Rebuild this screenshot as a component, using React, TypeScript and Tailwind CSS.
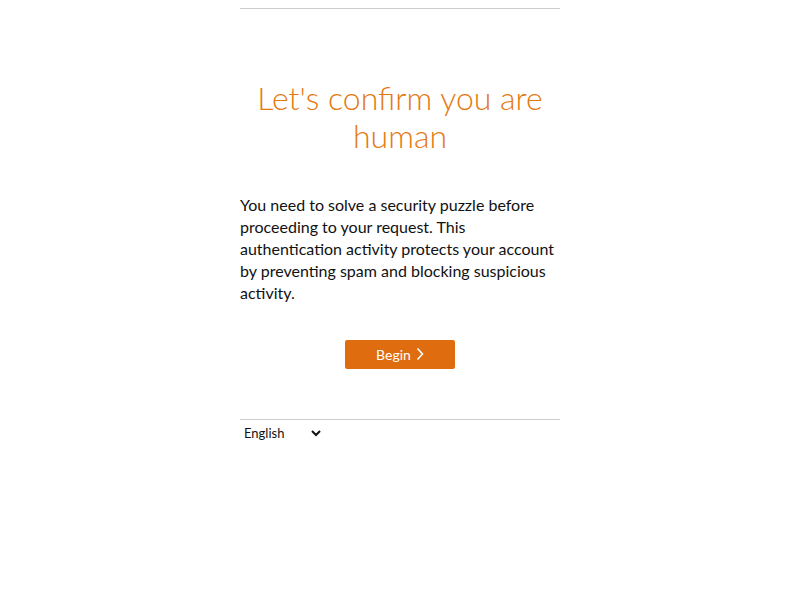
export default function App() {
  return (
    <div className="min-h-screen bg-white" style={{ fontFamily: "Lato, 'Noto Sans', Arial, sans-serif" }}>
      <div className="mx-auto w-[320px] pt-2">
        <div className="border-t border-[#cccccc]" />

        <h1 className="mt-[70px] text-center text-[32px] font-light leading-[38px] text-[#e47911]">
          Let's confirm you are human
        </h1>

        <p className="mt-[39px] text-[16px] leading-[22px] text-[#111111]">
          You need to solve a security puzzle before proceeding to your request. This
          authentication activity protects your account by preventing spam and blocking
          suspicious activity.
        </p>

        <div className="mt-[36px] flex justify-center">
          <button className="flex h-[29px] w-[110px] items-center justify-center gap-[5px] rounded-[2px] bg-[#e06c10] text-[14px] text-white">
            Begin
            <svg width="8" height="14" viewBox="0 0 8 14" fill="none" className="-mt-[2px]">
              <path d="M1.5 1.5l5 5.5-5 5.5" stroke="white" strokeWidth="1.6" />
            </svg>
          </button>
        </div>

        <div className="mt-[50px] border-t border-[#cccccc]" />
        <div>
          <select className="h-[24px] w-[84px] bg-white text-[13px] text-[#111111]">
            <option>English</option>
          </select>
        </div>
      </div>
    </div>
  );
}
